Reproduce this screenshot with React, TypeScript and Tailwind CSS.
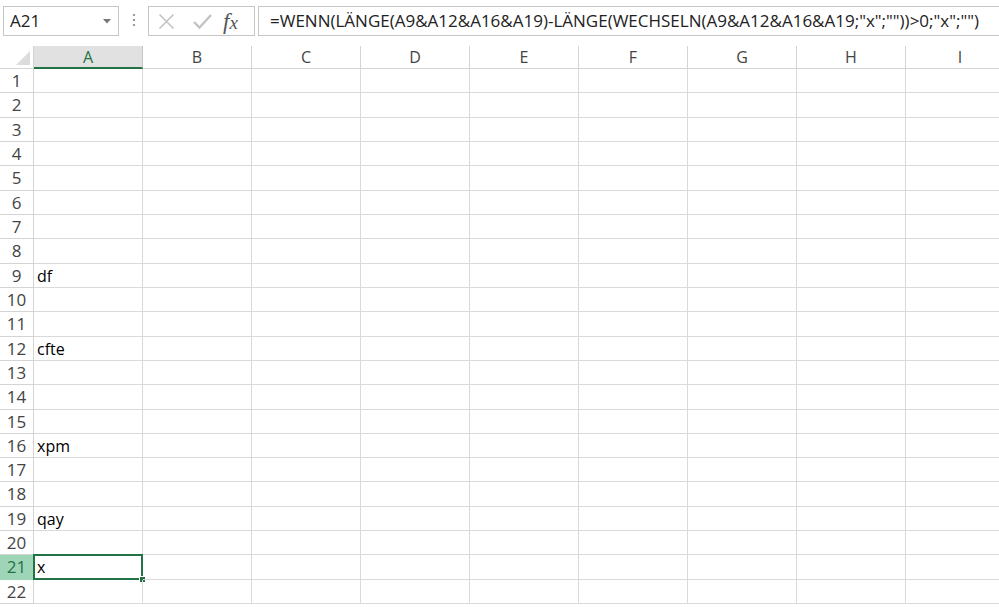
const COLS = ["A", "B", "C", "D", "E", "F", "G", "H", "I"];
// row heights alternate 24/25 px to match Excel's 24.3px rows
const ROW_H = [24, 25, 24, 24, 25, 24, 24, 25, 24, 24, 25, 24, 24, 25, 24, 24, 24, 25, 24, 24, 25, 24];
const VALUES: Record<number, string> = { 9: "df", 12: "cfte", 16: "xpm", 19: "qay", 21: "x" };
const SELECTED_ROW = 21;

const FORMULA = '=WENN(LÄNGE(A9&A12&A16&A19)-LÄNGE(WECHSELN(A9&A12&A16&A19;"x";""))>0;"x";"")';

function FormulaBar() {
  return (
    <div className="flex items-start h-[46px] bg-white pt-[6px]">
      {/* Name box */}
      <div className="ml-[3px] flex items-center w-[116px] h-[30px] border border-[#c6c6c6] bg-white">
        <span className="pl-[6px] text-[17px] text-[#222]" style={{ fontFamily: '"Open Sans", sans-serif' }}>A21</span>
        <svg className="ml-auto mr-[7px]" width="8" height="5" viewBox="0 0 8 5">
          <path d="M0 0h8L4 4.5z" fill="#777" />
        </svg>
      </div>
      {/* Splitter dots */}
      <div className="flex flex-col items-center gap-[3px] w-[29px] pt-[8px]">
        <div className="w-[2px] h-[2px] bg-[#999]" />
        <div className="w-[2px] h-[2px] bg-[#999]" />
        <div className="w-[2px] h-[2px] bg-[#999]" />
      </div>
      {/* Cancel / enter / fx */}
      <div className="flex items-center w-[107px] h-[30px] border border-[#c6c6c6] bg-white">
        <svg className="ml-[9px]" width="17" height="17" viewBox="0 0 17 17">
          <path d="M1.5 1.5l14 14M15.5 1.5l-14 14" stroke="#c3c3c3" strokeWidth="1.6" />
        </svg>
        <svg className="ml-[18px]" width="19" height="17" viewBox="0 0 19 17">
          <path d="M1 9l5.5 5.5L18 2" stroke="#c3c3c3" strokeWidth="2.4" fill="none" />
        </svg>
        <span
          className="ml-[11px] text-[23px] italic text-[#555] leading-none"
          style={{ fontFamily: '"Liberation Serif", serif' }}
        >
          f<span className="text-[19px]">x</span>
        </span>
      </div>
      {/* Formula input */}
      <div className="ml-[3px] flex-1 flex items-center h-[30px] border border-[#c6c6c6] border-r-0 bg-white overflow-hidden">
        <span
          className="pl-[11px] text-[17px] text-[#222] whitespace-nowrap"
          style={{ fontFamily: '"Open Sans", sans-serif' }}
        >
          {FORMULA}
        </span>
      </div>
    </div>
  );
}

function ColumnHeaders() {
  return (
    <div className="flex h-[23px]">
      <div className="relative w-[34px] shrink-0 border-r border-b border-[#d4d4d4] bg-white">
        <svg className="absolute right-[3px] bottom-[3px]" width="14" height="14" viewBox="0 0 14 14">
          <path d="M14 0V14H0z" fill="#dcdcdc" />
        </svg>
      </div>
      {COLS.map((c) => (
        <div
          key={c}
          className={
            c === "A"
              ? "w-[109px] shrink-0 flex items-center justify-center bg-[#e1e1e1] border-r border-[#c6c6c6] border-b-2 border-b-[#217346] text-[#217346]"
              : "w-[109px] shrink-0 flex items-center justify-center bg-white border-r border-b border-[#d4d4d4] text-[#444]"
          }
        >
          <span className="text-[16px]" style={{ fontFamily: '"Open Sans", sans-serif' }}>{c}</span>
        </div>
      ))}
    </div>
  );
}

function Row({ n }: { n: number }) {
  const h = ROW_H[n - 1] === 25 ? "h-[25px]" : "h-[24px]";
  const sel = n === SELECTED_ROW;
  return (
    <div className={`flex ${h}`}>
      <div
        className={
          sel
            ? "w-[34px] shrink-0 flex items-center justify-center bg-[#9fd5b7] border-r border-b border-[#9fd5b7] text-[#217346]"
            : "w-[34px] shrink-0 flex items-center justify-center bg-white border-r border-b border-[#d4d4d4] text-[#444]"
        }
      >
        <span className="text-[17px]" style={{ fontFamily: '"Open Sans", sans-serif' }}>{n}</span>
      </div>
      {COLS.map((c) => (
        <div key={c} className="relative w-[109px] shrink-0 border-r border-b border-[#dadada] flex items-center">
          {c === "A" && VALUES[n] && (
            <span className="pl-[3px] text-[16px] text-black" style={{ fontFamily: '"Open Sans", sans-serif' }}>
              {VALUES[n]}
            </span>
          )}
          {c === "A" && sel && (
            <>
              <div className="absolute left-[-1px] top-[-1px] right-[-1px] bottom-[-1px] border-2 border-[#217346]" />
              <div className="absolute right-[-4px] bottom-[-4px] w-[7px] h-[7px] bg-[#217346] border border-white" />
            </>
          )}
        </div>
      ))}
    </div>
  );
}

export default function App() {
  return (
    <div className="w-[999px] h-[607px] overflow-hidden bg-white">
      <FormulaBar />
      <ColumnHeaders />
      {ROW_H.map((_, i) => (
        <Row key={i} n={i + 1} />
      ))}
    </div>
  );
}
